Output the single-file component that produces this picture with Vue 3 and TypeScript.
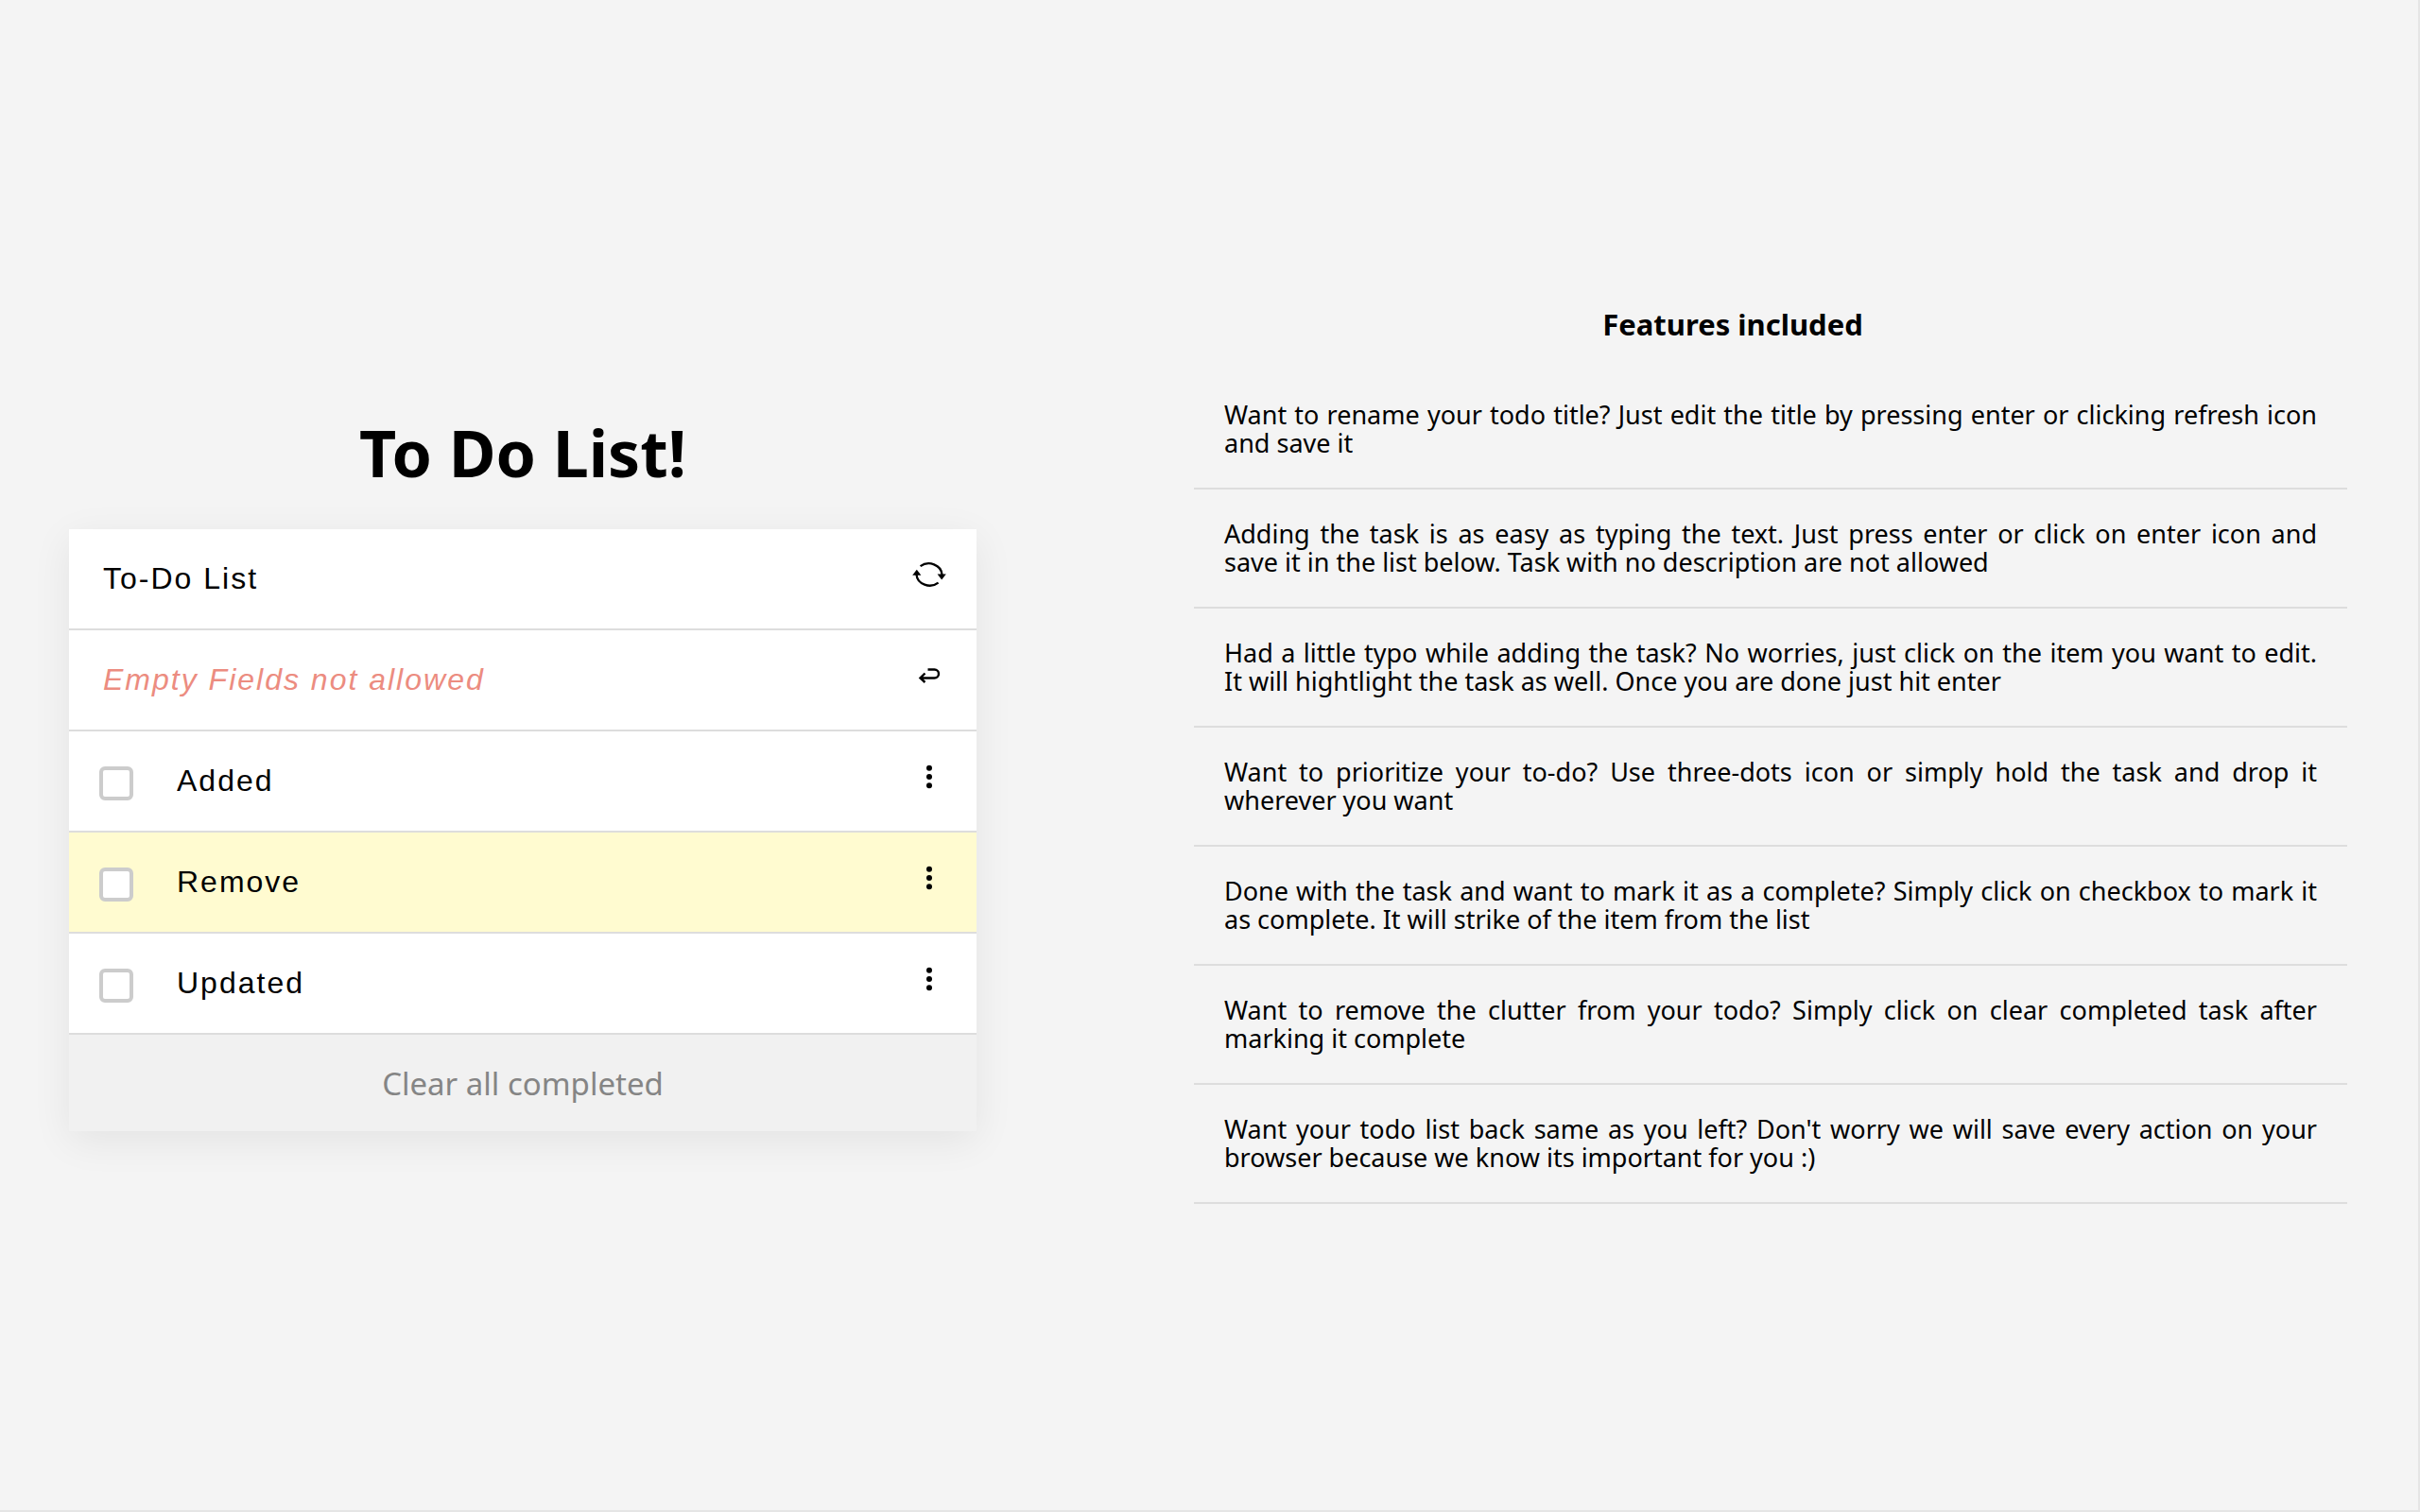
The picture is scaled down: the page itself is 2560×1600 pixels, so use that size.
<script setup lang="ts">
import { ref } from 'vue'

interface Task {
  id: number
  text: string
  done: boolean
  active: boolean
}

const title = ref('To-Do List')
const draft = ref('')

const tasks = ref<Task[]>([
  { id: 1, text: 'Added', done: false, active: false },
  { id: 2, text: 'Remove', done: false, active: true },
  { id: 3, text: 'Updated', done: false, active: false },
])

// \u00a0 keeps short word pairs together when a sentence wraps.
const features: string[] = [
  'Want to rename your todo title? Just edit the title by pressing enter or clicking refresh icon and save it',
  'Adding the task is as easy as typing the text. Just press enter or click on enter icon and save\u00a0it in the list below. Task with no description are not allowed',
  'Had a little typo while adding the task? No worries, just click on the item you want to edit. It\u00a0will hightlight the task as well. Once you are done just hit enter',
  'Want to prioritize your to-do? Use three-dots icon or simply hold the task and drop it wherever you want',
  'Done with the task and want to mark it as a complete? Simply click on checkbox to mark it as complete. It will strike of the item from the list',
  'Want to remove the clutter from your todo? Simply click on clear completed task after marking it complete',
  "Want your todo list back same as you left? Don't worry we will save every action on your browser because we know its important for you :)",
]

function addTask(): void {
  const text = draft.value.trim()
  if (!text) return
  tasks.value.push({ id: Date.now(), text, done: false, active: false })
  draft.value = ''
}

function clearCompleted(): void {
  tasks.value = tasks.value.filter((task) => !task.done)
}
</script>

<template>
  <main class="page">
    <section class="todo">
      <h1 class="heading">To Do List!</h1>
      <div class="card">
        <div class="row">
          <input v-model="title" class="field" type="text" aria-label="List title" />
          <button class="icon-button" type="button" aria-label="Save title">
            <svg width="36" height="28" viewBox="0 0 36 28" aria-hidden="true">
              <path d="M8.600 5.200A14 12.500 0 0 1 31.500 14" fill="none" stroke="#000" stroke-width="2.300" />
              <path d="M27.600 22.600A14 12.500 0 0 1 4.500 14" fill="none" stroke="#000" stroke-width="2.300" />
              <path d="M26.600 13.400h9.200l-4.600 6z" />
              <path d="M0.200 14.800h9.200l-4.600-6z" />
            </svg>
          </button>
        </div>
        <form class="row" @submit.prevent="addTask">
          <input
            v-model="draft"
            class="field error"
            type="text"
            placeholder="Empty Fields not allowed"
            aria-label="New task"
          />
          <button class="icon-button" type="submit" aria-label="Add task">
            <svg width="24" height="18" viewBox="0 0 24 18" aria-hidden="true">
              <path
                d="M10.500 2.500H17.500A4.500 4.500 0 0 1 17.500 11.500H3M7.500 6.500L2.500 11.500L7.500 16"
                fill="none"
                stroke="#000"
                stroke-width="2.400"
              />
            </svg>
          </button>
        </form>
        <div v-for="task in tasks" :key="task.id" class="row" :class="{ active: task.active }">
          <input v-model="task.done" class="check" type="checkbox" :aria-label="'Complete ' + task.text" />
          <input v-model="task.text" class="field task" type="text" :aria-label="'Task ' + task.id" />
          <button class="icon-button" type="button" :aria-label="'Move ' + task.text">
            <svg width="8" height="26" viewBox="0 0 8 26" aria-hidden="true">
              <circle cx="4" cy="3.700" r="3" />
              <circle cx="4" cy="13" r="3" />
              <circle cx="4" cy="22.300" r="3" />
            </svg>
          </button>
        </div>
        <button class="clear" type="button" @click="clearCompleted">Clear all completed</button>
      </div>
    </section>

    <section class="features">
      <h2 class="subheading">Features included</h2>
      <ul class="list">
        <li v-for="feature in features" :key="feature" class="feature">{{ feature }}</li>
      </ul>
    </section>
  </main>
</template>

<style>
body {
  margin: 0;
  background: #f4f4f4;
}
</style>

<style scoped>
.page {
  box-sizing: border-box;
  min-height: 100vh;
  display: flex;
  align-items: center;
  gap: 150px;
  padding: 0 75px 0 73px;
  border-right: 2px solid #e5e5e5;
  border-bottom: 2px solid #e5e5e5;
  color: #000;
  font-family: 'Noto Sans', 'Open Sans', sans-serif;
}

.todo {
  flex: 96 1 0;
  min-width: 0;
}

.heading {
  margin: 40px 0 43px;
  font-size: 68px;
  line-height: 76px;
  font-weight: 700;
  text-align: center;
}

.card {
  background: #fff;
  box-shadow: 0 10px 40px rgba(0, 0, 0, 0.07);
}

.row {
  display: flex;
  align-items: center;
  height: 105px;
  border-bottom: 2px solid #ddd;
}

.row.active {
  background: #fffbd0;
}

.field {
  flex: 1;
  min-width: 0;
  padding: 0 0 0 36px;
  border: 0;
  outline: 0;
  background: transparent;
  color: #000;
  font-family: 'Liberation Sans', Arial, sans-serif;
  font-size: 32px;
  letter-spacing: 2px;
}

.field.task {
  padding-left: 46px;
}

.error::placeholder {
  color: #ec8c80;
  font-style: italic;
  opacity: 1;
}

.check {
  appearance: none;
  box-sizing: border-box;
  width: 36px;
  height: 36px;
  margin: 5px 0 0 32px;
  border: 4px solid #ccc;
  border-radius: 6px;
  background: #fff;
}

.icon-button {
  display: flex;
  align-items: center;
  justify-content: center;
  align-self: flex-start;
  width: 100px;
  height: 96px;
  padding: 0;
  border: 0;
  background: transparent;
}

.clear {
  display: block;
  width: 100%;
  height: 102px;
  padding: 0;
  border: 0;
  background: #f1f1f1;
  color: #858585;
  font-family: inherit;
  font-size: 33px;
}

.features {
  flex: 130 1 0;
  min-width: 0;
}

.subheading {
  margin: 0 0 30px;
  font-size: 31px;
  line-height: 38px;
  font-weight: 700;
  text-align: center;
}

.list {
  margin: 0;
  padding: 0 0 0 80px;
  list-style: none;
}

.feature {
  padding: 32px;
  border-bottom: 2px solid #ddd;
  font-size: 27px;
  line-height: 30px;
  text-align: justify;
}
</style>
